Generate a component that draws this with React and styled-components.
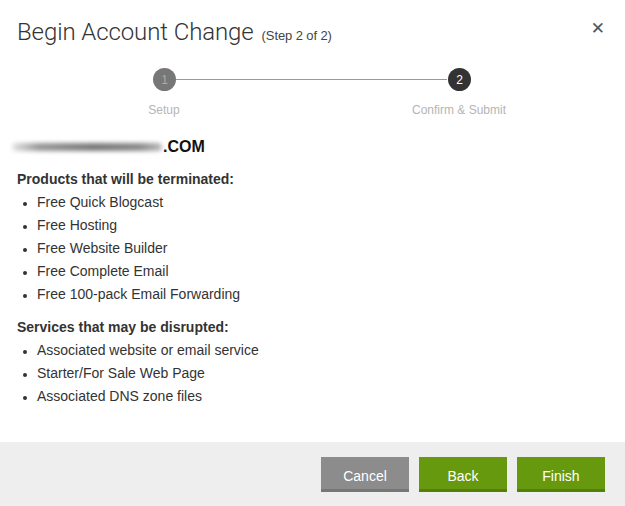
import React from "react";
import styled, { createGlobalStyle } from "styled-components";

const GlobalStyle = createGlobalStyle`
  html, body {
    margin: 0;
    padding: 0;
    background: #fff;
  }
  body {
    font-family: "Liberation Sans", Arial, sans-serif;
    color: #333;
  }
`;

const Modal = styled.div`
  width: 625px;
  height: 506px;
  display: flex;
  flex-direction: column;
  background: #fff;
`;

const Header = styled.div`
  display: flex;
  align-items: baseline;
  justify-content: space-between;
  padding: 18px 20px 0 17px;
  height: 33px;
`;

const Title = styled.h1`
  margin: 0;
  font-family: Roboto, "Liberation Sans", sans-serif;
  font-weight: 300;
  font-size: 24px;
  color: #333;
  letter-spacing: -0.1px;
`;

const Step = styled.span`
  font-family: "Liberation Sans", Arial, sans-serif;
  font-size: 13px;
  margin-left: 8px;
  color: #444;
`;

const Close = styled.button`
  border: 0;
  background: none;
  padding: 0;
  font-family: "DejaVu Sans", sans-serif;
  font-size: 17px;
  color: #555;
  cursor: pointer;
  line-height: 1;
  align-self: center;
  margin-top: -12px;
`;

const Stepper = styled.div`
  display: grid;
  grid-template-columns: 22px 1fr 22px;
  grid-template-rows: 23px auto;
  row-gap: 12px;
  align-items: center;
  margin: 17px 0 0 0;
  padding: 0 155px 0 153px;
`;

const Dot = styled.div`
  width: 23px;
  height: 23px;
  border-radius: 50%;
  background: ${p => (p.active ? "#333" : "#777")};
  color: ${p => (p.active ? "#fff" : "#aaa")};
  font-size: 12px;
  display: flex;
  align-items: center;
  justify-content: center;
`;

const Line = styled.div`
  height: 1px;
  background: #999;
  margin: 0 1px;
`;

const StepLabel = styled.div`
  font-size: 12px;
  color: #b5b5b5;
  white-space: nowrap;
  width: 22px;
  display: flex;
  justify-content: center;
  grid-column: ${p => p.col};
`;

const Body = styled.div`
  flex: 1;
  padding: 20px 17px 0 17px;
`;

const Domain = styled.div`
  display: flex;
  align-items: center;
  margin-left: -5px;
  font-size: 16px;
  font-weight: bold;
  color: #111;
  height: 20px;
`;

const Blur = styled.span`
  display: inline-block;
  width: 150px;
  height: 8px;
  margin-right: 1px;
  background: linear-gradient(90deg, #e4e4e4 0%, #999 18%, #7a7a7a 55%, #8a8a8a 85%, #bbb 100%);
  filter: blur(2px);
  border-radius: 4px;
`;

const SectionTitle = styled.div`
  font-size: 14px;
  font-weight: bold;
  color: #333;
  margin-top: ${p => p.top}px;
  line-height: 20px;
`;

const List = styled.ul`
  margin: 2px 0 0 0;
  padding: 0 0 0 20px;
  font-size: 14px;
  color: #333;
  li {
    line-height: 23px;
  }
  li::marker {
    font-size: 12px;
  }
`;

const Footer = styled.div`
  height: 64px;
  background: #eee;
  display: flex;
  justify-content: flex-end;
  align-items: center;
  gap: 10px;
  padding: 0 20px 0 0;
`;

const Button = styled.button`
  width: 88px;
  height: 35px;
  border: 0;
  border-bottom: 3px solid ${p => (p.green ? "#548009" : "#777")};
  background: ${p => (p.green ? "#67990e" : "#8c8c8c")};
  color: #fff;
  font-family: "Liberation Sans", Arial, sans-serif;
  font-size: 14px;
  padding: 6px 0 0 0;
  cursor: pointer;
`;

const products = [
  "Free Quick Blogcast",
  "Free Hosting",
  "Free Website Builder",
  "Free Complete Email",
  "Free 100-pack Email Forwarding"
];

const services = [
  "Associated website or email service",
  "Starter/For Sale Web Page",
  "Associated DNS zone files"
];

export default function App() {
  return (
    <Modal>
      <GlobalStyle />
      <Header>
        <Title>
          Begin Account Change<Step>(Step 2 of 2)</Step>
        </Title>
        <Close aria-label="Close">✕</Close>
      </Header>
      <Stepper>
        <Dot>1</Dot>
        <Line />
        <Dot active>2</Dot>
        <StepLabel col={1}>Setup</StepLabel>
        <StepLabel col={3}>Confirm &amp; Submit</StepLabel>
      </Stepper>
      <Body>
        <Domain>
          <Blur />
          .COM
        </Domain>
        <SectionTitle top={12}>Products that will be terminated:</SectionTitle>
        <List>
          {products.map(p => (
            <li key={p}>{p}</li>
          ))}
        </List>
        <SectionTitle top={11}>Services that may be disrupted:</SectionTitle>
        <List>
          {services.map(s => (
            <li key={s}>{s}</li>
          ))}
        </List>
      </Body>
      <Footer>
        <Button>Cancel</Button>
        <Button green>Back</Button>
        <Button green>Finish</Button>
      </Footer>
    </Modal>
  );
}
